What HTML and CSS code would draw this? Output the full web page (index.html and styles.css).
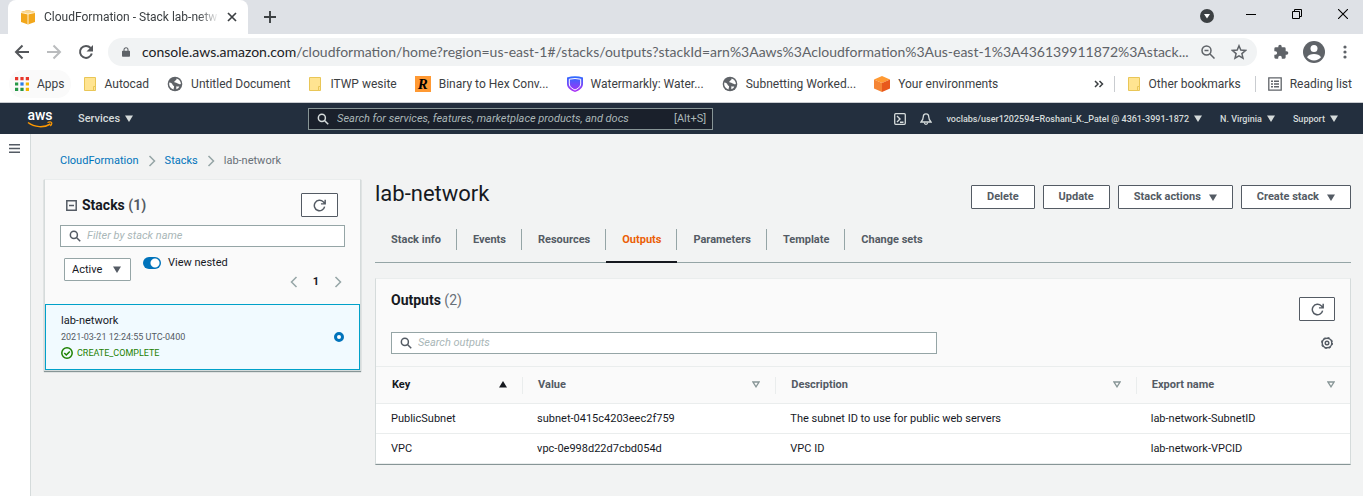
FILE: index.html
```html
<!DOCTYPE html>
<html lang="en">
<head>
<meta charset="utf-8">
<title>CloudFormation - Stack lab-network</title>
<link rel="stylesheet" href="styles.css">
</head>
<body>
<svg class="defs" aria-hidden="true">
  <symbol id="i-search" viewBox="0 0 16 16"><circle cx="6.5" cy="6.5" r="4.7" fill="none" stroke="currentColor" stroke-width="2"/><path d="M10 10l5 5" stroke="currentColor" stroke-width="2"/></symbol>
  <symbol id="i-refresh" viewBox="0 0 16 16"><path d="M14.3 9.3A6.4 6.4 0 1 1 12.6 3.5L14.6 5.4M15 1v5h-5.2" fill="none" stroke="currentColor" stroke-width="1.8"/></symbol>
  <symbol id="i-down" viewBox="0 0 8 7"><path d="M0 .5h8L4 7z" fill="currentColor"/></symbol>
  <symbol id="i-sort" viewBox="0 0 8 7"><path d="M1 1h6L4 5.8z" fill="none" stroke="currentColor" stroke-width="1.3"/></symbol>
  <symbol id="i-folder" viewBox="0 0 14 16"><path d="M1.5 1.5h11v9.500h-1.500v3.500h-9.500z" fill="#ffe491" stroke="#e9c657"/><path d="M10.500 14.500v-4h2v4z" fill="#ffe491" stroke="#e9c657"/></symbol>
  <symbol id="i-globe" viewBox="0 0 16 16"><circle cx="8" cy="8" r="7.300" fill="#5f6368"/><path d="M2.300 6.500c2 .2 3 1 3.300 2.200.2.900 1.500.8 1.500 2 0 1-.7 1.300-.4 2.700C3.600 12.800 1.700 9.800 2.300 6.500zM9.500 2.600c2.600.6 4.300 2.700 4.400 5.200-1 1.300-1.800-.1-3.100-.2-1-.1-1.100-.9-2.300-1-1.100 0-1.600-1-.7-1.700C8.600 4.300 9.900 4 9.500 2.600zM9 10.500h3.300c-.5 1.300-1.600 2.300-2.900 2.700-.3-.8.300-1.700-.4-2.700z" fill="#fff"/></symbol>
  <symbol id="i-chev" viewBox="0 0 8 12"><path d="M1.500 1L6.500 6l-5 5" fill="none" stroke="currentColor" stroke-width="1.500"/></symbol>
</svg>

<header class="browser">
  <div class="tabstrip">
    <div class="tab">
      <svg class="i16" viewBox="0 0 16 16"><path d="M1 3l7-2 7 2v10l-7 2.500L1 13z" fill="#f2a71b"/><path d="M1 3l7-2 7 2-7 2z" fill="#fad791"/><path d="M8 5v10.500M1 3.500L8 5l7-1.500" fill="none" stroke="#fff3d6"/></svg>
      <span class="tab-title">CloudFormation - Stack lab-netw</span>
      <button class="plain tab-close" aria-label="Close tab"><svg class="i10" viewBox="0 0 10 10"><path d="M1 1l8 8M9 1L1 9" stroke="#3c4043" stroke-width="1.700"/></svg></button>
    </div>
    <button class="plain new-tab" aria-label="New tab"><svg class="i12" viewBox="0 0 12 12"><path d="M6 0v12M0 6h12" stroke="#3c4043" stroke-width="1.900"/></svg></button>
    <div class="window-controls">
      <button class="plain" aria-label="Search tabs"><svg class="i14" viewBox="0 0 14 14"><circle cx="7" cy="7" r="7" fill="#3c4043"/><path d="M4 5h6L7 9.500z" fill="#fff"/></svg></button>
      <button class="plain" aria-label="Minimize"><svg class="i10" viewBox="0 0 10 10"><path d="M0 5.500h10" stroke="#000"/></svg></button>
      <button class="plain" aria-label="Restore"><svg class="i10" viewBox="0 0 10 10"><path d="M.5 2.500h7v7h-7zM2.500 2.500v-2h7v7h-2" fill="none" stroke="#000"/></svg></button>
      <button class="plain" aria-label="Close window"><svg class="i10" viewBox="0 0 10 10"><path d="M0 0l10 10M10 0L0 10" stroke="#000" stroke-width="1.100"/></svg></button>
    </div>
  </div>
  <div class="toolbar">
    <button class="plain" aria-label="Back"><svg class="i16" viewBox="0 0 16 16"><path d="M15 8H2M8.500 1.500L2 8l6.500 6.500" fill="none" stroke="#54575b" stroke-width="2"/></svg></button>
    <button class="plain" aria-label="Forward"><svg class="i16" viewBox="0 0 16 16"><path d="M1 8h13M7.500 1.500L14 8l-6.500 6.500" fill="none" stroke="#babcbe" stroke-width="2"/></svg></button>
    <button class="plain" aria-label="Reload"><svg class="i16" viewBox="0 0 16 16"><path d="M13.800 9.500A6 6 0 1 1 12.600 4" fill="none" stroke="#54575b" stroke-width="2"/><path d="M15 1v6.500H8.500z" fill="#54575b"/></svg></button>
    <div class="omnibox">
      <svg class="lock" viewBox="0 0 10 12"><path d="M1 4.500h8a1 1 0 0 1 1 1V11a1 1 0 0 1-1 1H1a1 1 0 0 1-1-1V5.500a1 1 0 0 1 1-1z" fill="#5f6368"/><path d="M2.500 5V3.200a2.500 2.500 0 0 1 5 0V5" fill="none" stroke="#5f6368" stroke-width="1.300"/></svg>
      <div class="url" role="textbox" tabindex="0" aria-label="Address"><span class="host">console.aws.amazon.com</span>/cloudformation/home?region=us-east-1#/stacks/outputs?stackId=arn%3Aaws%3Acloudformation%3Aus-east-1%3A436139911872%3Astack...</div>
      <button class="plain" aria-label="Zoom"><svg class="i14" viewBox="0 0 14 14"><circle cx="5.500" cy="5.500" r="4.500" fill="none" stroke="#5f6368" stroke-width="1.500"/><path d="M9 9l4.500 4.500M3.500 5.500h4" stroke="#5f6368" stroke-width="1.500"/></svg></button>
      <button class="plain star" aria-label="Bookmark this page"><svg class="i16" viewBox="0 0 16 16"><path d="M8 1.800l1.800 4.300 4.700.4-3.600 3.100 1.100 4.600L8 11.800l-4 2.400 1.100-4.600-3.600-3.100 4.700-.4z" fill="none" stroke="#5f6368" stroke-width="1.500"/></svg></button>
    </div>
    <div class="tool-end">
      <button class="plain" aria-label="Extensions"><svg class="i16" viewBox="0 0 24 24"><path d="M20.500 11H19V7a2 2 0 0 0-2-2h-4V3.500a2.500 2.500 0 0 0-5 0V5H4a2 2 0 0 0-2 2v3.800h1.500a2.700 2.700 0 0 1 0 5.400H2V20a2 2 0 0 0 2 2h3.800v-1.500a2.700 2.700 0 0 1 5.400 0V22H17a2 2 0 0 0 2-2v-4h1.500a2.500 2.500 0 0 0 0-5z" fill="#5f6368"/></svg></button>
      <button class="plain" aria-label="Profile"><svg class="i22" viewBox="0 0 22 22"><circle cx="11" cy="11" r="11" fill="#5f6368"/><circle cx="11" cy="7.500" r="3.500" fill="#fff"/><path d="M4 16.200c1.200-2 4-3.200 7-3.200s5.800 1.200 7 3.200c-1.600 2-4 3.200-7 3.200s-5.400-1.200-7-3.200z" fill="#fff"/></svg></button>
      <button class="plain kebab" aria-label="Menu"><svg class="dots" viewBox="0 0 4 14"><g fill="#5f6368"><circle cx="2" cy="2" r="1.600"/><circle cx="2" cy="7" r="1.600"/><circle cx="2" cy="12" r="1.600"/></g></svg></button>
    </div>
  </div>
  <nav class="bookmarks" aria-label="Bookmarks">
    <a class="bm apps" href="#"><svg class="i14" viewBox="0 0 13 13"><path d="M0 0h3v3H0zM5 0h3v3H5zM10 0h3v3h-3z" fill="#e8372b"/><path d="M0 5h3v3H0zM0 10h3v3H0zM5 10h3v3H5z" fill="#279847"/><path d="M5 5h3v3H5z" fill="#2b7de9"/><path d="M10 5h3v3h-3zM10 10h3v3h-3z" fill="#f4b400"/></svg>Apps</a>
    <a class="bm" href="#"><svg class="folder"><use href="#i-folder"/></svg>Autocad</a>
    <a class="bm" href="#"><svg class="i16"><use href="#i-globe"/></svg>Untitled Document</a>
    <a class="bm" href="#"><svg class="folder"><use href="#i-folder"/></svg>ITWP wesite</a>
    <a class="bm" href="#"><span class="r-icon">R</span>Binary to Hex Conv...</a>
    <a class="bm" href="#"><svg class="i16" viewBox="0 0 16 16"><defs><linearGradient id="wm" x2="0" y2="1"><stop stop-color="#2b6bff"/><stop offset="1" stop-color="#b02cf5"/></linearGradient></defs><path d="M0 1.500Q8-.8 16 1.500V8c0 4.500-5 7-8 8-3-1-8-3.500-8-8z" fill="url(#wm)"/><path d="M2.300 3.200Q8 1.800 13.700 3.200V8c0 3.200-3.500 5-5.700 6-2.200-1-5.700-2.800-5.700-6z" fill="none" stroke="#fff"/></svg>Watermarkly: Water...</a>
    <a class="bm" href="#"><svg class="i16"><use href="#i-globe"/></svg>Subnetting Worked...</a>
    <a class="bm" href="#"><svg class="i16" viewBox="0 0 16 16"><path d="M8 0l8 3.500L8 7 0 3.500z" fill="#ff9a33"/><path d="M0 3.500L8 7v9l-8-3.500z" fill="#f58536"/><path d="M16 3.500L8 7v9l8-3.500z" fill="#e8591c"/></svg>Your environments</a>
    <span class="bm-end">
      <button class="plain" aria-label="More bookmarks"><svg class="i10" viewBox="0 0 10 10"><path d="M1 2l3 3-3 3M5.500 2l3 3-3 3" fill="none" stroke="#3c4043" stroke-width="1.500"/></svg></button>
      <a class="bm" href="#"><svg class="folder"><use href="#i-folder"/></svg>Other bookmarks</a>
      <a class="bm" href="#"><svg class="i14" viewBox="0 0 14 14"><path d="M.8.8h12.400v12.400H.8z" fill="none" stroke="#5f6368" stroke-width="1.300"/><path d="M3 4.200h2M6 4.200h5M3 7h2M6 7h5M3 9.800h2M6 9.800h5" stroke="#5f6368" stroke-width="1.400"/></svg>Reading list</a>
    </span>
  </nav>
</header>

<header class="aws">
  <a class="aws-logo" href="#" aria-label="AWS"><svg viewBox="0 0 26 24"><text x="13" y="13" text-anchor="middle" class="aws-word">aws</text><path d="M1 15.500c6.500 5 16 5.500 22.500 1.500" fill="none" stroke="#f90" stroke-width="1.500"/><path d="M20.500 15.500c1.500-.7 3.500-.7 4 0s-.2 2.500-1.200 3.500" fill="none" stroke="#f90" stroke-width="1.200"/></svg></a>
  <button class="nav-btn services">Services <svg class="caret"><use href="#i-down"/></svg></button>
  <label class="global-search"><svg class="i12"><use href="#i-search"/></svg><input type="text" aria-label="Search" placeholder="Search for services, features, marketplace products, and docs"><span>[Alt+S]</span></label>
  <div class="aws-right">
    <button class="nav-btn" aria-label="CloudShell"><svg class="i12" viewBox="0 0 12 12"><rect x=".7" y=".7" width="10.600" height="10.600" rx="1" fill="none" stroke="currentColor" stroke-width="1.300"/><path d="M3 3l3 3-3 3M6 9.200h3.500" fill="none" stroke="currentColor" stroke-width="1.400"/></svg></button>
    <button class="nav-btn" aria-label="Notifications"><svg class="i12" viewBox="0 0 12 12"><path d="M6 .8c-2 0-2.700 1.500-2.700 3 0 2.500-.8 3.500-2.300 5.200h10C9.500 7.300 8.700 6.300 8.700 3.800c0-1.500-.7-3-2.700-3z" fill="none" stroke="currentColor" stroke-width="1.300"/><path d="M4.300 9.500c.3 2.400 3.100 2.400 3.400 0" fill="none" stroke="currentColor" stroke-width="1.300"/></svg></button>
    <button class="nav-btn small">voclabs/user1202594=Roshani_K._Patel @ 4361-3991-1872 <svg class="caret"><use href="#i-down"/></svg></button>
    <button class="nav-btn small">N. Virginia <svg class="caret"><use href="#i-down"/></svg></button>
    <button class="nav-btn small">Support <svg class="caret"><use href="#i-down"/></svg></button>
  </div>
</header>

<div class="app">
  <aside class="rail"><button class="plain" aria-label="Open navigation"><svg class="burger" viewBox="0 0 11 9"><path d="M0 .7h11M0 4.500h11M0 8.300h11" stroke="#545b64" stroke-width="1.400"/></svg></button></aside>
  <main class="content">
    <nav class="crumbs" aria-label="Breadcrumb">
      <a href="#">CloudFormation</a><svg class="chev"><use href="#i-chev"/></svg><a href="#">Stacks</a><svg class="chev"><use href="#i-chev"/></svg><span>lab-network</span>
    </nav>
    <div class="columns">
      <section class="card stacks">
        <div class="stacks-head">
          <div class="row">
            <button class="plain" aria-label="Collapse"><svg class="i11" viewBox="0 0 11 11"><path d="M.8.8h9.400v9.400H.8zM3 5.500h5" fill="none" stroke="#545b64" stroke-width="1.500"/></svg></button>
            <h2>Stacks <span class="count">(1)</span></h2>
            <button class="btn icon-btn" aria-label="Refresh stacks"><svg class="i13"><use href="#i-refresh"/></svg></button>
          </div>
          <label class="field"><svg class="i12"><use href="#i-search"/></svg><input type="text" aria-label="Filter by stack name" placeholder="Filter by stack name"></label>
          <div class="controls">
            <div class="select"><select aria-label="Status filter"><option>Active</option></select><svg class="caret"><use href="#i-down"/></svg></div>
            <label class="toggle"><input type="checkbox" role="switch" checked>View nested</label>
            <div class="pager">
              <button class="plain" aria-label="Previous page"><svg class="chev flip"><use href="#i-chev"/></svg></button>
              <b>1</b>
              <button class="plain" aria-label="Next page"><svg class="chev"><use href="#i-chev"/></svg></button>
            </div>
          </div>
        </div>
        <label class="stack-item">
          <span class="stack-text">
            <span class="stack-name">lab-network</span>
            <span class="stack-date">2021-03-21 12:24:55 UTC-0400</span>
            <span class="stack-status"><svg class="i12" viewBox="0 0 12 12"><circle cx="6" cy="6" r="5.200" fill="none" stroke="currentColor" stroke-width="1.500"/><path d="M3.300 6l2 2 3.500-3.500" fill="none" stroke="currentColor" stroke-width="1.500"/></svg>CREATE_COMPLETE</span>
          </span>
          <input type="radio" name="stack" checked aria-label="lab-network">
        </label>
      </section>

      <section class="detail">
        <div class="title-row">
          <h1>lab-network</h1>
          <div class="actions">
            <button class="btn">Delete</button>
            <button class="btn">Update</button>
            <button class="btn">Stack actions <svg class="caret"><use href="#i-down"/></svg></button>
            <button class="btn">Create stack <svg class="caret"><use href="#i-down"/></svg></button>
          </div>
        </div>
        <div class="tabs" role="tablist">
          <button role="tab"><span>Stack info</span></button>
          <button role="tab"><span>Events</span></button>
          <button role="tab"><span>Resources</span></button>
          <button role="tab" class="active" aria-selected="true"><span>Outputs</span></button>
          <button role="tab"><span>Parameters</span></button>
          <button role="tab"><span>Template</span></button>
          <button role="tab"><span>Change sets</span></button>
        </div>
        <div class="card outputs">
          <div class="out-head">
            <h2>Outputs <span class="count light">(2)</span></h2>
            <button class="btn icon-btn" aria-label="Refresh outputs"><svg class="i13"><use href="#i-refresh"/></svg></button>
          </div>
          <div class="out-search">
            <label class="field"><svg class="i12"><use href="#i-search"/></svg><input type="text" aria-label="Search outputs" placeholder="Search outputs"></label>
            <button class="plain" aria-label="Preferences"><svg class="i12" viewBox="0 0 12 12"><circle cx="6" cy="6" r="4.800" fill="none" stroke="#545b64" stroke-width="1.400"/><circle cx="6" cy="6" r="5.400" fill="none" stroke="#545b64" stroke-width="1.200" stroke-dasharray="2.100 2.140"/><circle cx="6" cy="6" r="1.800" fill="none" stroke="#545b64" stroke-width="1.400"/></svg></button>
          </div>
          <table>
            <colgroup><col class="c-key"><col class="c-value"><col class="c-desc"><col class="c-export"></colgroup>
            <thead><tr>
              <th class="sorted"><button>Key <svg class="caret up"><use href="#i-down"/></svg></button></th>
              <th><button>Value <svg class="caret"><use href="#i-sort"/></svg></button></th>
              <th><button>Description <svg class="caret"><use href="#i-sort"/></svg></button></th>
              <th><button>Export name <svg class="caret"><use href="#i-sort"/></svg></button></th>
            </tr></thead>
            <tbody>
              <tr><td>PublicSubnet</td><td>subnet-0415c4203eec2f759</td><td>The subnet ID to use for public web servers</td><td>lab-network-SubnetID</td></tr>
              <tr><td>VPC</td><td>vpc-0e998d22d7cbd054d</td><td>VPC ID</td><td>lab-network-VPCID</td></tr>
            </tbody>
          </table>
        </div>
      </section>
    </div>
  </main>
</div>
</body>
</html>
```
FILE: styles.css
```css
* { box-sizing: border-box; }
html, body { height: 100%; }
body {
  margin: 0;
  display: flex;
  flex-direction: column;
  background: #f2f3f3;
  color: #16191f;
  font: 11px/16px Roboto, "Noto Sans", sans-serif;
}
h1, h2 { margin: 0; }
a { text-decoration: none; }
svg { display: block; flex: none; }
button, input, select { font: inherit; color: inherit; margin: 0; }
button { cursor: pointer; }
.defs { position: absolute; width: 0; height: 0; }
.plain { border: 0; background: none; padding: 0; display: flex; }
.i10 { width: 10px; height: 10px; }
.i11 { width: 11px; height: 11px; }
.i12 { width: 12px; height: 12px; }
.i13 { width: 13px; height: 13px; }
.i14 { width: 14px; height: 14px; }
.i16 { width: 16px; height: 16px; }
.i22 { width: 22px; height: 22px; }
.caret { width: 8px; height: 7px; }

/* Browser frame */
.browser { background: #fff; border-bottom: 1px solid #c9ccd0; color: #3c4043; font: 12px/16px Roboto, "Open Sans", sans-serif; }
.tabstrip { display: flex; align-items: center; height: 34px; background: #dee1e6; padding-left: 8px; }
.tab { width: 240px; height: 34px; display: flex; align-items: center; background: #fff; border-radius: 8px 8px 0 0; padding: 0 11px 0 12px; gap: 8px; }
.tab-title { flex: 1; white-space: nowrap; -webkit-mask-image: linear-gradient(90deg, #000 88%, transparent); mask-image: linear-gradient(90deg, #000 88%, transparent); }
.new-tab { margin-left: 16px; }
.window-controls { display: flex; align-items: center; margin-left: auto; padding: 0 15px 6px 0; gap: 36px; }
.window-controls .plain:first-child { margin-top: 4px; }
.window-controls .plain:first-child + .plain { margin-left: -4px; }
.toolbar { display: flex; align-items: center; height: 36px; padding: 0 16px 0 14px; gap: 16px; }
.omnibox { flex: 1; min-width: 0; height: 28px; display: flex; align-items: center; border-radius: 14px; background: #f1f3f4; padding: 0 10px 0 14px; margin-left: -2px; }
.lock { width: 8px; height: 12px; margin-right: 12px; }
.url { flex: 1; min-width: 0; white-space: nowrap; font: 14px/20px Lato, sans-serif; color: #5f6368; margin-right: 18px; }
.host { color: #202124; }
.star { margin-left: 16px; }
.tool-end { display: flex; align-items: center; gap: 14px; }
.kebab { padding-left: 4px; }
.dots { width: 4px; height: 14px; }
.bookmarks { display: flex; align-items: center; height: 32px; padding: 0 11px 4px 9px; white-space: nowrap; }
.bm { display: flex; align-items: center; gap: 8px; color: #3c4043; margin-right: 18px; }
.apps { height: 28px; border-radius: 14px; background: #fafafa; padding: 0 6px; margin-right: 12px; }
.folder { width: 14px; height: 16px; }
.r-icon { width: 16px; height: 16px; background: #ff9933; color: #000; font: italic bold 15px/16px "Liberation Serif", serif; text-align: center; }
.bm-end { display: flex; align-items: center; margin-left: auto; gap: 10px; }
.bm-end .bm { margin-right: 0; border-left: 1px solid #c9ccd0; padding-left: 12px; }
.bm-end .bm + .bm { margin-left: 4px; }

/* Console navigation */
.aws { display: flex; align-items: center; height: 31px; padding: 0 25px 0 27px; background: #232f3e; color: #d5dbdb; white-space: nowrap; }
.aws-logo svg { width: 26px; height: 24px; }
.aws-word { font: 500 14px Roboto, sans-serif; fill: #fff; }
.nav-btn { display: flex; align-items: center; gap: 5px; border: 0; background: none; padding: 0; font-weight: 500; }
.services { margin-left: 25px; }
.global-search { display: flex; align-items: center; gap: 8px; width: 405px; height: 22px; margin-left: 175px; border: 1px solid #879596; background: #1a202b; padding: 0 6px 0 8px; }
.global-search input { flex: 1; min-width: 0; border: 0; padding: 0; background: none; outline: 0; }
.global-search span { color: #aab7b8; }
input::placeholder { color: #aab7b8; font-style: italic; opacity: 1; }
.aws-right { display: flex; align-items: center; margin-left: auto; gap: 14px; }
.small { font-size: 9px; }
.aws-right .small + .small { margin-left: 4px; }

/* Console body */
.app { flex: 1; display: flex; }
.rail { width: 31px; background: #fff; border-right: 1px solid #d5dbdb; padding: 10px 0 0 9px; }
.burger { width: 11px; height: 9px; }
.content { flex: 1; min-width: 0; padding: 0 12px 0 13px; }
.crumbs { display: flex; align-items: center; gap: 9px; padding: 19px 16px 10px; color: #687078; }
.crumbs a { color: #0073bb; }
.chev { width: 8px; height: 12px; color: #95a5a6; }
.flip { transform: scaleX(-1); }
.columns { display: grid; grid-template-columns: 317px minmax(0, 1fr); gap: 14px; align-items: start; }
.card { background: #fafafa; border: 1px solid #d5dbdb; border-top-color: #eaeded; }
h2 { font-size: 14px; line-height: 20px; font-weight: 700; }
.count { color: #545b64; }
.light { font-weight: 400; color: #687078; }
.btn { display: flex; align-items: center; justify-content: center; gap: 8px; height: 24px; padding: 0 15px; border: 1px solid #545b64; border-radius: 1px; background: #fff; color: #545b64; font-weight: 700; white-space: nowrap; }
.icon-btn { width: 37px; padding: 0; margin-left: auto; }
.field { display: flex; align-items: center; gap: 6px; height: 22px; padding: 0 8px; border: 1px solid #95a5a6; background: #fff; color: #545b64; }
.field input { flex: 1; min-width: 0; border: 0; padding: 0; background: none; outline: 0; }
.stacks { box-shadow: 0 1px 1px #879596; }
.stacks-head { padding: 13px 15px 13px; }
.row { display: flex; align-items: center; gap: 5px; padding: 0 7px 0 6px; margin-bottom: 8px; }
.controls { display: flex; align-items: flex-start; margin: 11px 0 0 4px; gap: 12px; height: 33px; }
.select { position: relative; }
.select select { width: 67px; height: 23px; appearance: none; border: 1px solid #95a5a6; border-radius: 1px; background: #fff; padding: 0 7px; color: #16191f; }
.select .caret { position: absolute; right: 10px; top: 8px; color: #545b64; pointer-events: none; }
.toggle { display: flex; align-items: center; height: 9px; gap: 7px; }
.toggle input { appearance: none; width: 18px; height: 12px; border-radius: 6px; background: radial-gradient(circle at 12px 6px, #fff 4px, transparent 5px) #0073bb; }
.pager { display: flex; align-items: center; align-self: flex-end; margin-left: auto; gap: 15px; padding: 0 3px 1px 0; }
.stack-item { display: flex; align-items: center; border: 1px solid #00a1c9; background: #f1faff; padding: 8px 15px; }
.stack-text { flex: 1; display: flex; flex-direction: column; }
.stack-date, .stack-status { font-size: 9px; color: #545b64; }
.stack-item .stack-status { color: #1d8102; display: flex; align-items: center; gap: 4px; }
.stack-item input { appearance: none; width: 10px; height: 10px; border: 3px solid #0073bb; border-radius: 50%; background: #fff; }

.title-row { display: flex; align-items: center; justify-content: space-between; height: 30px; }
h1 { font-size: 22px; line-height: 28px; font-weight: 400; }
.actions { display: flex; gap: 8px; padding-top: 6px; }
.tabs { display: flex; height: 37px; margin: 17px 0 15px; border-bottom: 1px solid #95a5a6; }
.tabs button { height: 37px; padding: 3px 0 11px; border: 0; border-bottom: 2px solid transparent; background: none; color: #545b64; font-weight: 700; }
.tabs span { display: block; padding: 3px 15px 2px 16px; border-right: 1px solid #95a5a6; }
.tabs button:last-child span { border: 0; }
.tabs .active { color: #eb5f07; border-bottom-color: #16191f; }
.outputs { border-bottom-color: #879596; }
.out-head { display: flex; align-items: flex-start; padding: 11px 15px 0; }
.out-head .icon-btn { width: 36px; margin-top: 7px; }
.out-search { display: flex; align-items: center; justify-content: space-between; padding: 11px 17px 12px 15px; }
.out-search .field { width: 58%; }
table { width: 100%; table-layout: fixed; border-collapse: collapse; border-top: 1px solid #eaeded; }
.c-key { width: 15%; } .c-value { width: 26%; } .c-desc { width: 37%; } .c-export { width: 22%; }
th { height: 37px; padding: 0; border-bottom: 1px solid #eaeded; text-align: left; }
th button { width: 100%; display: flex; align-items: center; justify-content: space-between; border: 0; background: none; border-left: 1px solid #eaeded; padding: 0 15px 1px; color: #545b64; font-weight: 700; }
th:first-child button { border-left-color: transparent; }
th.sorted button { color: #16191f; }
th .caret { color: #879596; }
th .up { color: #16191f; transform: rotate(180deg); }
td { height: 30px; padding: 1px 15px 0; background: #fff; border-bottom: 1px solid #eaeded; white-space: nowrap; }
```
